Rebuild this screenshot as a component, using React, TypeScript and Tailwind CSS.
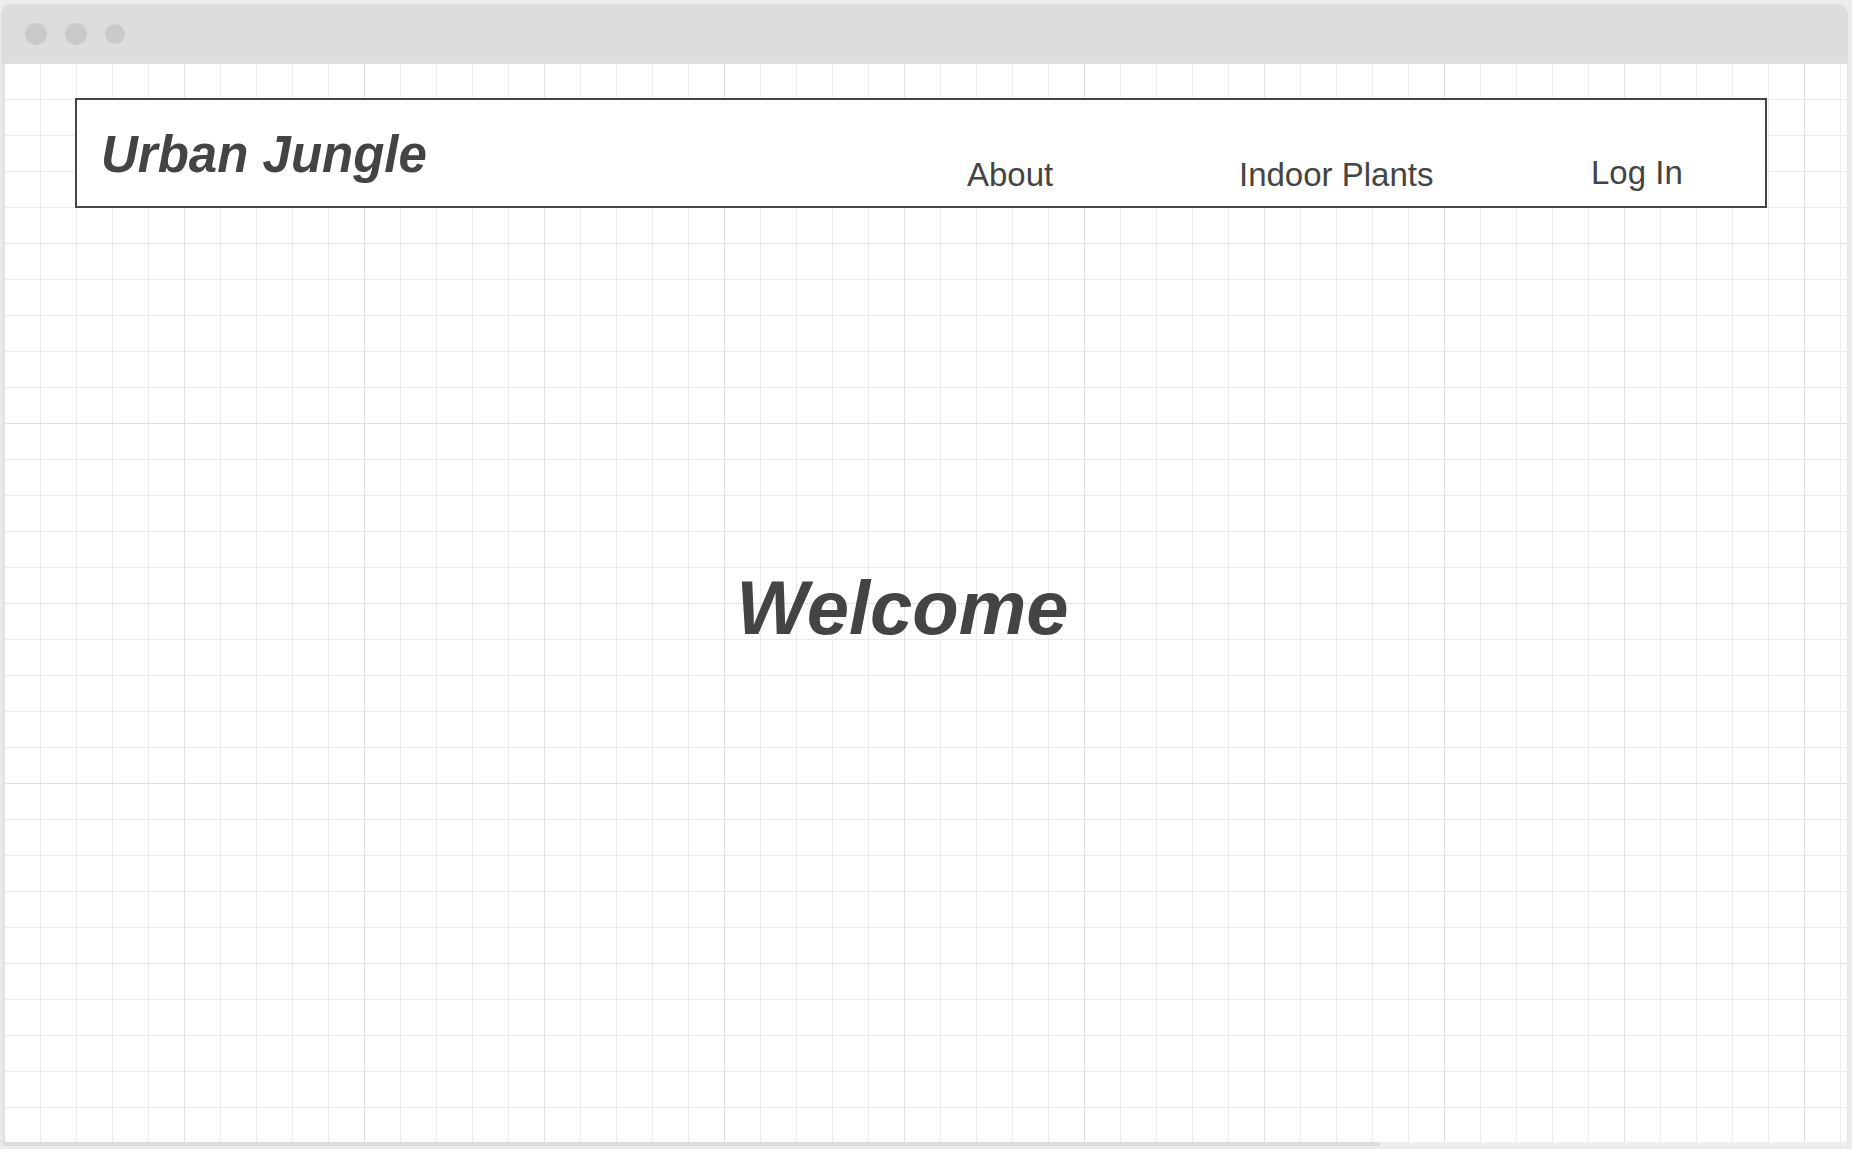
import React from "react";

export default function App() {
  const font = { fontFamily: '"Liberation Sans", Arial, sans-serif' };
  return (
    <div
      className="w-[1852px] h-[1149px] overflow-hidden bg-[#ececec] flex flex-col pt-[4px] pl-[1px] pr-[4px]"
      style={font}
    >
      <div className="flex-1 flex flex-col rounded-t-[10px] bg-[#e6e6e6] overflow-hidden">
        {/* title bar */}
        <div className="h-[59px] shrink-0 bg-[#dddddd] flex items-center pl-[24px]">
          <div className="w-[22px] h-[22px] rounded-full bg-[#cacaca]" />
          <div className="w-[22px] h-[22px] rounded-full bg-[#cacaca] ml-[18px]" />
          <div className="w-[20px] h-[20px] rounded-full bg-[#cacaca] ml-[18px]" />
        </div>
        {/* content */}
        <div className="flex-1 ml-[3px] mr-[1px] bg-white bg-[linear-gradient(to_right,#e0e0e0_1px,transparent_1px),linear-gradient(to_bottom,#e0e0e0_1px,transparent_1px),linear-gradient(to_right,#ececec_1px,transparent_1px),linear-gradient(to_bottom,#ececec_1px,transparent_1px)] [background-size:180px_180px,180px_180px,36px_36px,36px_36px] flex flex-col pt-[35px] pl-[71px]">
          <header className="w-[1692px] h-[110px] border-2 border-[#444444] bg-white flex items-start pl-[24px] text-[#444444]">
            <div className="w-[866px] shrink-0 mt-[25px] text-[51px] leading-[60px] font-bold italic">
              Urban Jungle
            </div>
            <div className="w-[272px] shrink-0 mt-[55px] text-[33px] leading-[40px]">About</div>
            <div className="w-[352px] shrink-0 mt-[55px] text-[33px] leading-[40px]">Indoor Plants</div>
            <div className="mt-[53px] text-[33px] leading-[40px]">Log In</div>
          </header>
          <div className="mt-[357px] w-[1692px] flex justify-center pr-[37px]">
            <h1 className="text-[76px] leading-[86px] font-bold italic text-[#444444]">Welcome</h1>
          </div>
        </div>
        {/* scrollbar */}
        <div className="h-[4px] shrink-0 ml-[3px] mr-[1px] bg-[#efefef] flex">
          <div className="w-[1376px] h-full bg-[#dcdcdc]" />
        </div>
        <div className="h-[3px] shrink-0 bg-[#ececec]" />
      </div>
    </div>
  );
}
